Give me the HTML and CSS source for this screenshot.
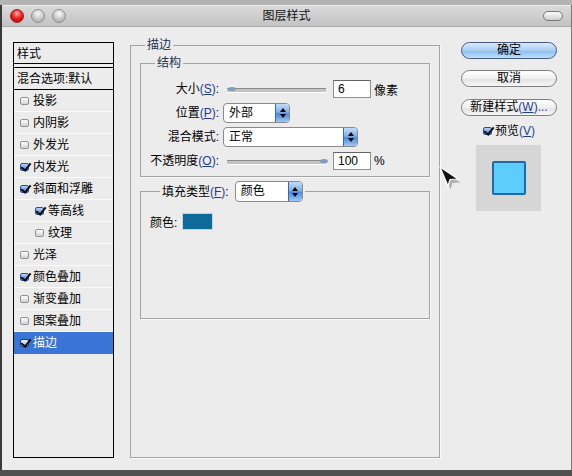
FILE: index.html
```html
<!DOCTYPE html>
<html lang="zh-CN">
<head>
<meta charset="utf-8">
<title>图层样式</title>
<link rel="stylesheet" href="styles.css">
</head>
<body>
<div class="screen">
  <div class="strip-top"></div>
  <div class="window">
    <div class="titlebar">
      <div class="lights">
        <span class="light red"></span>
        <span class="light gray"></span>
        <span class="light gray"></span>
      </div>
      <div class="title">图层样式</div>
      <div class="pill-wrap"><span class="pill"></span></div>
    </div>
    <div class="content">
      <div class="styles-list">
        <div class="list-head">样式</div>
        <div class="list-blend">混合选项:默认</div>
        <div class="item"><span class="cb"></span>投影</div>
        <div class="item"><span class="cb"></span>内阴影</div>
        <div class="item"><span class="cb"></span>外发光</div>
        <div class="item"><span class="cb on"></span>内发光</div>
        <div class="item"><span class="cb on"></span>斜面和浮雕</div>
        <div class="item indent"><span class="cb on"></span>等高线</div>
        <div class="item indent"><span class="cb"></span>纹理</div>
        <div class="item"><span class="cb"></span>光泽</div>
        <div class="item"><span class="cb on"></span>颜色叠加</div>
        <div class="item"><span class="cb"></span>渐变叠加</div>
        <div class="item"><span class="cb"></span>图案叠加</div>
        <div class="item selected"><span class="cb on"></span>描边</div>
      </div>

      <fieldset class="group outer">
        <legend class="lg-outer">描边</legend>
        <fieldset class="group struct">
          <legend class="lg-struct">结构</legend>
          <div class="form">
            <div class="lbl">大小<span class="mn">(<u>S</u>)</span>:</div>
            <div class="ctl">
              <div class="slider"><span class="thumb thumb-min"></span></div>
              <span class="field">6</span>
              <span class="unit">像素</span>
            </div>
            <div class="lbl">位置<span class="mn">(<u>P</u>)</span>:</div>
            <div class="ctl">
              <div class="select sel-pos"><span class="sel-text">外部</span><span class="sel-btn"><i class="up"></i><i class="dn"></i></span></div>
            </div>
            <div class="lbl">混合模式:</div>
            <div class="ctl">
              <div class="select sel-mode"><span class="sel-text">正常</span><span class="sel-btn"><i class="up"></i><i class="dn"></i></span></div>
            </div>
            <div class="lbl">不透明度<span class="mn">(<u>O</u>)</span>:</div>
            <div class="ctl">
              <div class="slider"><span class="thumb thumb-max"></span></div>
              <span class="field">100</span>
              <span class="unit">%</span>
            </div>
          </div>
        </fieldset>
        <fieldset class="group fill">
          <legend class="lg-fill">
            <span class="fill-lbl">填充类型<span class="mn">(<u>F</u>)</span>:</span>
            <span class="select sel-fill"><span class="sel-text">颜色</span><span class="sel-btn"><i class="up"></i><i class="dn"></i></span></span>
          </legend>
          <div class="fill-body">
            <div class="color-row">颜色:<span class="swatch"></span></div>
          </div>
        </fieldset>
      </fieldset>

      <div class="actions">
        <div class="btn default">确定</div>
        <div class="btn b2">取消</div>
        <div class="btn b3">新建样式<span class="mn">(<u>W</u>)...</span></div>
        <div class="preview-check"><span class="cb on"></span><span>预览<span class="mn">(<u>V</u>)</span></span></div>
        <div class="preview"><span class="preview-square"></span></div>
      </div>
    </div>
  </div>
  <div class="strip-bottom"></div>

  <svg class="cursor" width="24" height="26" viewBox="0 0 24 26">
    <polygon points="2,3 20,15 12,15.5 10,22" fill="#000" opacity="0.25" transform="translate(1.5,1.5)"/>
    <polygon points="1,1 19,13 11,13.5 9,20" fill="#111" stroke="#fff" stroke-width="1.2" stroke-linejoin="round"/>
  </svg>
</div>
</body>
</html>
```

FILE: styles.css
```css
* { box-sizing: border-box; }
html, body { margin: 0; padding: 0; }
body {
  width: 572px;
  height: 476px;
  overflow: hidden;
  font-family: "Liberation Sans", "Noto Sans CJK SC", sans-serif;
  font-size: 12px;
  color: #000;
  background: #4c4c4c;
}
.screen {
  position: relative;
  width: 572px;
  height: 476px;
  display: flex;
  flex-direction: column;
}
.strip-top { height: 5px; background: #b4b4b4; }
.strip-bottom { flex: 1; background: #505050; }
.window {
  height: 465px;
  background: #ececec;
  border-left: 2px solid #3a3a3a;
  border-right: 1px solid #7a7a7a;
  display: flex;
  flex-direction: column;
}

/* title bar */
.titlebar {
  height: 22px;
  display: grid;
  grid-template-columns: 1fr auto 1fr;
  align-items: center;
  padding: 0 8px;
  background: linear-gradient(#dadada, #c3c3c3);
  border-top: 1px solid #ededed;
  border-bottom: 1px solid #ababab;
}
.lights { display: flex; gap: 7px; }
.light {
  width: 14px;
  height: 14px;
  border-radius: 50%;
}
.light.red {
  border: 1px solid #9a1c1c;
  background: radial-gradient(circle at 50% 30%, #ffb0b0 0, #f03a3a 35%, #c80c0c 70%, #e85050 100%);
}
.light.gray {
  border: 1px solid #8e8e8e;
  background: radial-gradient(circle at 50% 30%, #fafafa 0, #cfcfcf 45%, #b2b2b2 75%, #dcdcdc 100%);
}
.title { font-size: 12px; color: #111; line-height: 16px; }
.pill-wrap { display: flex; justify-content: flex-end; }
.pill {
  width: 20px;
  height: 10px;
  border: 1px solid #767676;
  border-radius: 5px;
  background: linear-gradient(#fbfbfb, #cfcfcf);
}

/* content */
.content {
  flex: 1;
  display: flex;
  align-items: flex-start;
  padding: 10px 0 0 11px;
}

/* left list */
.styles-list {
  width: 101px;
  height: 416px;
  margin-top: 5px;
  border: 1px solid #000;
  background: #ececec;
}
.list-head {
  height: 21px;
  border-bottom: 1px solid #000;
  padding: 2px 0 0 3px;
  line-height: 18px;
}
.list-blend {
  margin-top: 3px;
  height: 23px;
  border-top: 1px solid #000;
  border-bottom: 1px solid #000;
  padding: 1px 0 0 3px;
  line-height: 20px;
  white-space: nowrap;
}
.item {
  height: 22px;
  border-bottom: 1px solid #fbfbfb;
  display: flex;
  align-items: center;
  gap: 4px;
  padding-left: 6px;
  line-height: 16px;
  white-space: nowrap;
}
.item.indent { padding-left: 21px; }
.item.selected { background: #3a74d6; color: #fff; border-bottom-color: #3a74d6; }

.cb {
  position: relative;
  flex: none;
  display: inline-block;
  width: 9px;
  height: 8px;
  border: 1px solid #909090;
  border-radius: 2px;
  background: linear-gradient(#ffffff, #d2d2d2);
}
.cb.on {
  border-color: #2c4f96;
  background: linear-gradient(#b8d4f6, #4b82d8);
}
.cb.on::after {
  content: "";
  position: absolute;
  left: 2px;
  top: -3px;
  width: 4px;
  height: 8px;
  border: solid #101010;
  border-width: 0 2px 2px 0;
  transform: rotate(38deg);
}
.item.selected .cb.on { background: linear-gradient(#e6f0fc, #a8c6ee); border-color: #1d3a78; }

/* fieldsets */
fieldset.group {
  margin: 0;
  padding: 0;
  min-width: 0;
  border: 1px solid #a4a4a4;
  box-shadow: 1px 1px 0 #fafafa;
}
fieldset.group legend {
  padding: 0 2px;
  line-height: 16px;
  color: #1d3350;
}
fieldset.outer {
  width: 310px;
  height: 421px;
  margin-left: 16px;
}
fieldset.group .lg-outer { margin-left: 14px; }
fieldset.struct {
  width: 290px;
  margin: 2px 0 0 9px;
}
fieldset.group .lg-struct { margin-left: 14px; }

.form {
  display: grid;
  grid-template-columns: 78px 1fr;
  grid-auto-rows: 20px;
  column-gap: 4px;
  row-gap: 4px;
  margin: 8px 0 5px;
}
.lbl {
  text-align: right;
  line-height: 20px;
  white-space: nowrap;
}
.mn { color: #1f3c8e; }
.mn u { text-decoration-thickness: 1px; text-underline-offset: 1px; }
.ctl { display: flex; align-items: center; }

.slider {
  position: relative;
  width: 104px;
  height: 20px;
  margin-right: 6px;
}
.slider::before {
  content: "";
  position: absolute;
  left: 4px;
  right: 1px;
  top: 9px;
  height: 3px;
  border-top: 1px solid #8c8c8c;
  border-bottom: 1px solid #ffffff;
  background: #c4c4c4;
}
.thumb {
  position: absolute;
  top: 8px;
  width: 8px;
  height: 4px;
  border-radius: 50%;
  background: #7f9cbf;
}
.thumb-min { left: 5px; }
.thumb-max { left: 97px; }

.field {
  width: 38px;
  height: 18px;
  border: 1px solid #8e8e8e;
  border-top-color: #646464;
  background: #fff;
  padding-left: 4px;
  line-height: 16px;
}
.unit { margin-left: 3px; }

.select {
  display: flex;
  height: 20px;
  border: 1px solid #8a8a8a;
  border-radius: 4px;
  background: #fff;
  overflow: hidden;
}
.sel-text {
  flex: 1;
  padding-left: 5px;
  line-height: 18px;
  color: #000;
}
.sel-btn {
  width: 14px;
  border-left: 1px solid #41679f;
  background: linear-gradient(#c2dcf8, #7fb0ec 45%, #4a8ae0 55%, #9cc8f4);
  display: flex;
  flex-direction: column;
  align-items: center;
  justify-content: center;
  gap: 2px;
}
.sel-btn .up {
  width: 0; height: 0;
  border-left: 3px solid transparent;
  border-right: 3px solid transparent;
  border-bottom: 4px solid #000;
}
.sel-btn .dn {
  width: 0; height: 0;
  border-left: 3px solid transparent;
  border-right: 3px solid transparent;
  border-top: 4px solid #000;
}
.sel-pos { width: 67px; }
.sel-mode { width: 135px; }
.sel-fill { width: 68px; height: 21px; }
.sel-fill .sel-text { line-height: 19px; }

fieldset.fill {
  width: 290px;
  margin: 4px 0 0 9px;
}
fieldset.group .lg-fill {
  margin-left: 19px;
  display: flex;
  align-items: center;
  gap: 6px;
}
.lg-fill .fill-lbl { color: #000; }
.fill-body {
  height: 116px;
  padding: 11px 0 0 9px;
}
.color-row {
  display: flex;
  align-items: center;
  gap: 5px;
  height: 17px;
}
.swatch {
  width: 31px;
  height: 17px;
  background: #0e6a98;
  border: 1px solid #c8d2dc;
}

/* right column */
.actions {
  width: 96px;
  margin: 5px 0 0 21px;
  display: flex;
  flex-direction: column;
}
.btn {
  height: 17px;
  border: 1px solid #7e7e7e;
  border-radius: 9px;
  background: linear-gradient(#ffffff, #f0f0f0 50%, #e2e2e2 51%, #f6f6f6);
  text-align: center;
  line-height: 15px;
  white-space: nowrap;
}
.btn.default {
  border-color: #43597e;
  background: linear-gradient(#dbeafc, #a9cdf3 50%, #8bbcee 51%, #bfe0fb);
}
.btn.b2 { margin-top: 11px; }
.btn.b3 { margin-top: 12px; }
.preview-check {
  margin-top: 8px;
  height: 14px;
  display: flex;
  align-items: center;
  justify-content: center;
  gap: 3px;
  line-height: 14px;
}
.preview {
  margin: 7px 0 0 15px;
  width: 65px;
  height: 66px;
  background: #d6d6d6;
  display: flex;
  align-items: center;
  justify-content: center;
}
.preview-square {
  width: 34px;
  height: 34px;
  border: 2px solid #1d6aa6;
  border-radius: 2px;
  background: #5ccdfc;
}

.cursor {
  position: absolute;
  left: 439px;
  top: 166px;
}
```
